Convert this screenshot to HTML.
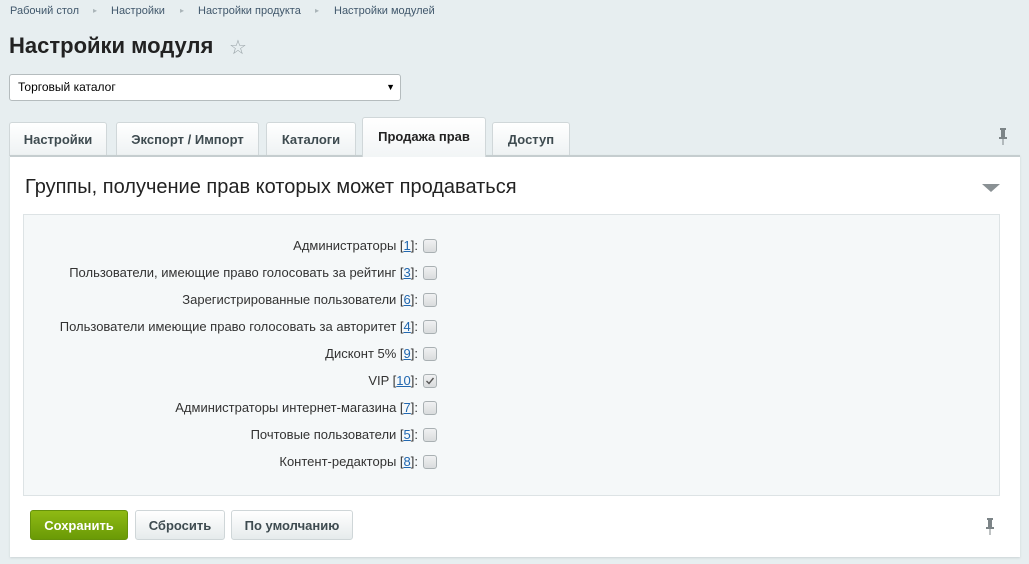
<!DOCTYPE html>
<html><head><meta charset="utf-8"><style>
body{margin:0;width:1029px;height:564px;background:#e7eef0;font-family:"Liberation Sans",Arial,sans-serif;position:relative;overflow:hidden}
.a{position:absolute}
.bc{position:absolute;top:5px;font-size:11px;color:#40576b;white-space:nowrap}
.ar{position:absolute;top:6px;font-size:8px;color:#aab4b8}
.tab{position:absolute;top:122px;height:34px;background:linear-gradient(#fff,#eef2f3);border:1px solid #d0d7d9;border-bottom:none;border-radius:3px 3px 0 0;font-size:13px;font-weight:bold;color:#3e4b50;text-align:center;line-height:33px;box-sizing:border-box}
.row{position:absolute;left:23px;width:395px;text-align:right;font-size:13px;color:#333;height:16px;line-height:16px;white-space:nowrap}
.row a{color:#2067b0;text-decoration:underline}
.cb{position:absolute;left:423px;width:14px;height:14px;border:1px solid #a9b0b3;border-radius:3px;background:linear-gradient(#f0f1f2,#d9dcdd);box-sizing:border-box}
.btn{position:absolute;top:510px;height:30px;border-radius:3px;font-size:13px;text-align:center;line-height:29px;box-sizing:border-box}
</style></head><body>
<div class="bc" style="left:10px">Рабочий стол</div><div class="ar" style="left:93px">▸</div>
<div class="bc" style="left:111px">Настройки</div><div class="ar" style="left:180px">▸</div>
<div class="bc" style="left:198px">Настройки продукта</div><div class="ar" style="left:315px">▸</div>
<div class="bc" style="left:334px">Настройки модулей</div>
<div class="a" style="left:9px;top:33px;font-size:22px;font-weight:bold;color:#222">Настройки модуля</div>
<div class="a" style="left:229px;top:35px;font-size:20px;color:#9aa4a8">☆</div>
<div class="a" style="left:9px;top:74px;width:392px;height:27px;background:#fff;border:1px solid #b5bcbe;border-radius:3px;box-sizing:border-box;font-size:12px;line-height:25px;padding-left:8px;color:#000">Торговый каталог<span style="position:absolute;right:5px;font-size:9px">▼</span></div>
<div class="tab" style="left:9px;width:98px">Настройки</div>
<div class="tab" style="left:116px;width:143px">Экспорт / Импорт</div>
<div class="tab" style="left:266px;width:90px">Каталоги</div>
<div class="tab" style="left:362px;width:124px;top:117px;height:40px;background:linear-gradient(#fff,#f2f5f6);color:#222;line-height:38px;z-index:2">Продажа прав</div>
<div class="tab" style="left:492px;width:78px">Доступ</div>
<div class="a" style="left:998px;top:128px">
<svg width="10" height="18"><rect x="2" y="0" width="6" height="2" fill="#7c8487"/><rect x="3" y="2" width="4" height="7" fill="#7c8487"/><rect x="1" y="9" width="8" height="2" fill="#7c8487"/><rect x="4.5" y="11" width="1" height="6" fill="#7c8487"/></svg></div>
<div class="a" style="left:10px;top:155px;width:1010px;height:400px;background:#fff;border-top:2px solid #c5cdcf;box-shadow:0 1px 2px #cbd3d5"></div>
<div class="a" style="left:25px;top:176px;font-size:20px;color:#222">Группы, получение прав которых может продаваться</div>
<div class="a" style="left:982px;top:184px;width:0;height:0;border-left:9px solid transparent;border-right:9px solid transparent;border-top:8px solid #8a9194"></div>
<div class="a" style="left:23px;top:214px;width:977px;height:282px;background:#f5f8f9;border:1px solid #dde3e5;box-sizing:border-box"></div>
<div class="row" style="top:238px">Администраторы [<a>1</a>]:</div><div class="cb" style="top:239px"></div>
<div class="row" style="top:265px">Пользователи, имеющие право голосовать за рейтинг [<a>3</a>]:</div><div class="cb" style="top:266px"></div>
<div class="row" style="top:292px">Зарегистрированные пользователи [<a>6</a>]:</div><div class="cb" style="top:293px"></div>
<div class="row" style="top:319px">Пользователи имеющие право голосовать за авторитет [<a>4</a>]:</div><div class="cb" style="top:320px"></div>
<div class="row" style="top:346px">Дисконт 5% [<a>9</a>]:</div><div class="cb" style="top:347px"></div>
<div class="row" style="top:373px">VIP [<a>10</a>]:</div><div class="cb" style="top:374px"><svg width="12" height="12" style="position:absolute;left:0;top:0"><path d="M2.5 6L5 8.5L9.5 3" stroke="#555" stroke-width="1.4" fill="none"/></svg></div>
<div class="row" style="top:400px">Администраторы интернет-магазина [<a>7</a>]:</div><div class="cb" style="top:401px"></div>
<div class="row" style="top:427px">Почтовые пользователи [<a>5</a>]:</div><div class="cb" style="top:428px"></div>
<div class="row" style="top:454px">Контент-редакторы [<a>8</a>]:</div><div class="cb" style="top:455px"></div>
<div class="btn" style="left:30px;width:98px;background:linear-gradient(#8fba14,#6a9a06);color:#fff;border:1px solid #66920b;font-weight:bold">Сохранить</div>
<div class="btn" style="left:135px;width:90px;background:linear-gradient(#fff,#e6ebec);color:#3e4b50;border:1px solid #cfd6d8;font-weight:bold">Сбросить</div>
<div class="btn" style="left:231px;width:122px;background:linear-gradient(#fff,#e6ebec);color:#3e4b50;border:1px solid #cfd6d8;font-weight:bold">По умолчанию</div>
<div class="a" style="left:985px;top:518px"><svg width="10" height="18"><rect x="2" y="0" width="6" height="2" fill="#7c8487"/><rect x="3" y="2" width="4" height="7" fill="#7c8487"/><rect x="1" y="9" width="8" height="2" fill="#7c8487"/><rect x="4.5" y="11" width="1" height="6" fill="#7c8487"/></svg></div>
</body></html>
